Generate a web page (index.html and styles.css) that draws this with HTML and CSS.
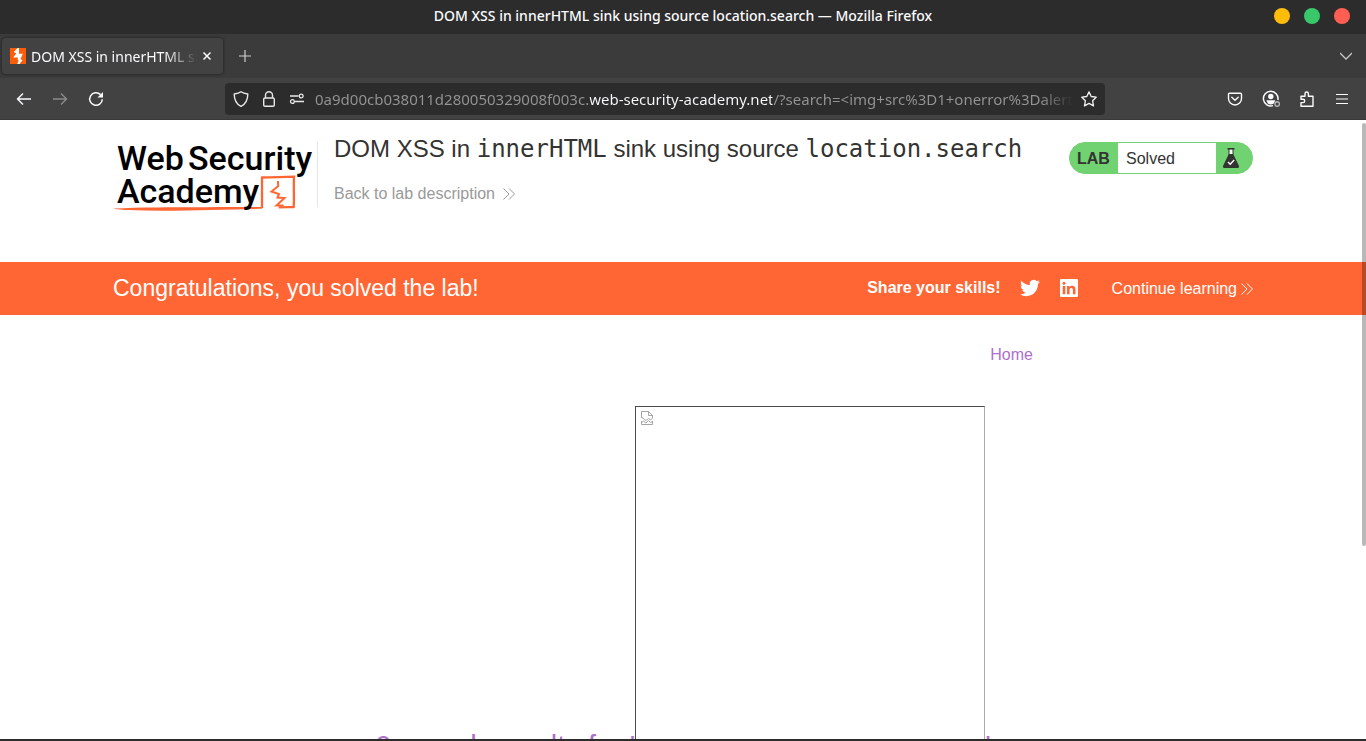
FILE: index.html
```html
<!DOCTYPE html>
<html lang="en">
<head>
<meta charset="utf-8">
<title>DOM XSS in innerHTML sink using source location.search</title>
<link rel="stylesheet" href="styles.css">
</head>
<body>
<div class="titlebar">
  <span class="window-title">DOM XSS in innerHTML sink using source location.search — Mozilla Firefox</span>
  <div class="window-buttons">
    <button class="dot dot-min" aria-label="Minimize"></button>
    <button class="dot dot-max" aria-label="Maximize"></button>
    <button class="dot dot-close" aria-label="Close"></button>
  </div>
</div>
<div class="tabbar">
  <div class="tab">
    <svg class="i16" viewBox="0 0 16 16"><path fill="#ff5c0a" d="M0 0h16v16H0z"/><path fill="#fff" d="M7.500 0H9v5.800h3.800L10.500 11l2 1.300L9.500 16H7.200l1.600-3.400-1-.6V9.500H3.200L6.300 5.200 3.800 4z"/></svg>
    <span class="tab-label">DOM XSS in innerHTML sink</span>
    <button class="icon-btn tab-close" aria-label="Close tab"><svg class="i10" viewBox="0 0 10 10" fill="none" stroke="#fbfbfe" stroke-width="1.500"><path d="M1.500 1.500l7 7M8.500 1.500l-7 7"/></svg></button>
  </div>
  <button class="icon-btn new-tab" aria-label="New tab"><svg class="i12" viewBox="0 0 12 12" fill="none" stroke="#d0d0d0" stroke-width="1.200"><path d="M6 0v12M0 6h12"/></svg></button>
  <button class="icon-btn tab-list" aria-label="List all tabs"><svg class="i12" viewBox="0 0 12 12" fill="none" stroke="#c4c4c4" stroke-width="1.300"><path d="M0 3l6 6 6-6"/></svg></button>
</div>
<div class="toolbar">
  <div class="nav">
    <button class="icon-btn" aria-label="Back"><svg class="i16" viewBox="0 0 16 16" fill="none" stroke="#fbfbfe" stroke-width="1.400"><path d="M15 8H1.500M7 2.500L1.500 8 7 13.500"/></svg></button>
    <button class="icon-btn" aria-label="Forward"><svg class="i16" viewBox="0 0 16 16" fill="none" stroke="#8b8b8b" stroke-width="1.400"><path d="M1 8h13.500M9 2.500L14.500 8 9 13.500"/></svg></button>
    <button class="icon-btn" aria-label="Reload"><svg class="i16" viewBox="0 0 16 16"><path fill="none" stroke="#fbfbfe" stroke-width="1.500" d="M14.300 8.200A6.300 6.300 0 1 1 12.500 3.600"/><path fill="#fbfbfe" d="M15 1v5.500H9.500z"/></svg></button>
  </div>
  <div class="urlbar">
    <svg class="i16" viewBox="0 0 16 16" fill="none" stroke="#e8e8e8" stroke-width="1.400" stroke-linejoin="round"><path d="M8 .8c1.600 1.200 4.200 1.900 6.800 2.200 0 6-2 10-6.800 12.400C3.200 13 1.200 9 1.200 3 3.800 2.700 6.400 2 8 .8z"/></svg>
    <svg class="i16" viewBox="0 0 16 16" fill="none" stroke="#e8e8e8" stroke-width="1.400"><rect x="2.700" y="7" width="10.600" height="8.200" rx="1.300"/><path d="M4.500 7V4.300a3.500 3.500 0 0 1 7 0V7"/></svg>
    <svg class="i16" viewBox="0 0 16 16" fill="none" stroke="#e8e8e8" stroke-width="1.300"><path d="M1 5h8.500M6 10.500h9"/><circle cx="12.200" cy="5" r="1.900"/><circle cx="3.400" cy="10.500" r="1.900"/></svg>
    <input class="url" type="text" aria-label="Address" value="0a9d00cb038011d280050329008f003c.web-security-academy.net/?search=&lt;img+src%3D1+onerror%3Dalert(1)&gt;">
    <button class="icon-btn" aria-label="Bookmark this page"><svg class="i16" viewBox="0 0 16 16" fill="none" stroke="#f0f0f0" stroke-width="1.300" stroke-linejoin="round"><path d="M8 .9l2.200 4.600 5 .7-3.600 3.500.9 5.200L8 12.400l-4.500 2.500.9-5.200L.8 6.200l5-.7z"/></svg></button>
  </div>
  <div class="tools">
    <button class="icon-btn" aria-label="Pocket"><svg class="i16" viewBox="0 0 16 16" fill="none" stroke="#fbfbfe" stroke-width="1.400" stroke-linecap="round" stroke-linejoin="round"><path d="M2.500 2.200h11a1 1 0 0 1 1 1v4.300a6.500 6.500 0 0 1-13 0V3.200a1 1 0 0 1 1-1zM4.800 6.300L8 9.200l3.200-2.900"/></svg></button>
    <button class="icon-btn" aria-label="Account"><svg class="i18" viewBox="0 0 18 18"><path fill="none" stroke="#fbfbfe" stroke-width="1.500" d="M15.900 10A7.300 7.300 0 1 0 11 15.600"/><circle cx="8.800" cy="6.500" r="2.700" fill="#fbfbfe"/><path fill="#fbfbfe" d="M4.300 10.300h9l-1.700 3.500a6 6 0 0 1-5.600 0z"/><circle cx="15.200" cy="14" r="2.200" fill="#424242" stroke="#b5b5b5" stroke-width="1.400"/></svg></button>
    <button class="icon-btn" aria-label="Extensions"><svg class="i16" viewBox="0 0 16 16" fill="none" stroke="#fbfbfe" stroke-width="1.400" stroke-linejoin="round"><path d="M2 5.200h4V2.700a1.700 1.700 0 0 1 3.400 0v2.500H14v10H2v-3.600h2a1.700 1.700 0 0 0 0-3.400H2z"/></svg></button>
    <button class="icon-btn" aria-label="Menu"><svg class="i16" viewBox="0 0 16 16" stroke="#fbfbfe" stroke-width="1.200"><path d="M2 3.500h12M2 8h12M2 12.500h12"/></svg></button>
  </div>
</div>
<div class="page">
  <header class="lab-header">
    <div class="container lab-head">
      <svg class="logo" viewBox="0 0 204 72" role="img" aria-label="Web Security Academy">
        <path d="M0 68.500c40-2 90-1 149-1.500v1.800c-40 .5-90 3-134 1.200C6 69.800 3 69.200 0 68.500z" fill="#ff6633"/>
        <path d="M149 68V37.500c10-.6 20-.3 32-.8-.5 10 .3 20-.3 30.300-5 .3-10 0-15 .4" fill="none" stroke="#ff6633" stroke-width="2.300"/>
        <path d="M165 41l.2 5-6.700 5.500 7.500 2.500-1.500 3.500 7 .5-8 7.500h7" fill="none" stroke="#ff6633" stroke-width="2"/>
        <text class="logo-text" x="4" y="30">Web</text>
        <text class="logo-text" x="75" y="30">Security</text>
        <text class="logo-text" x="4" y="63">Academy</text>
      </svg>
      <div class="lab-title">
        <h2>DOM XSS in <code>innerHTML</code> sink using source <code>location.search</code></h2>
        <a class="back" href="#">Back to lab description <svg class="chev" viewBox="0 0 12 12"><path d="M.5.500L6 6 .5 11.500M6 .5L11.500 6 6 11.500"/></svg></a>
      </div>
      <div class="lab-status">
        <span class="lab-tag">LAB</span>
        <span class="lab-state">Solved</span>
        <svg class="flask" viewBox="0 0 16 20"><path fill="#fff" d="M6 1.500h4v5H6z"/><path fill="#333332" d="M4.500 0h7v1.500h-1V6.500L16 18q.3 2-1.500 2h-13Q-.3 20 0 18L5.500 6.500v-5h-1zM6.500 1.500V6h3V1.500z"/><path d="M5 14l2.200 2.200 4-4.200" fill="none" stroke="#fff" stroke-width="1.400"/></svg>
      </div>
    </div>
  </header>
  <section class="banner">
    <div class="container banner-row">
      <h4>Congratulations, you solved the lab!</h4>
      <span class="share">Share your skills!</span>
      <a class="social" href="#" aria-label="Twitter"><svg class="i20" viewBox="0 0 24 24" fill="#fff"><path d="M23.950 4.570a10 10 0 0 1-2.820.77 4.960 4.960 0 0 0 2.160-2.720c-.95.550-2 .950-3.120 1.180a4.920 4.920 0 0 0-8.390 4.480C7.690 8.100 4.070 6.130 1.640 3.160a4.820 4.820 0 0 0-.66 2.480c0 1.710.87 3.210 2.180 4.100a4.900 4.900 0 0 1-2.220-.62v.06a4.920 4.920 0 0 0 3.950 4.830 5 5 0 0 1-2.210.08 4.940 4.940 0 0 0 4.600 3.420A9.870 9.870 0 0 1 0 19.540a14 14 0 0 0 7.550 2.210c9.050 0 14-7.500 14-13.980 0-.21 0-.42-.02-.63a9.940 9.940 0 0 0 2.420-2.570z"/></svg></a>
      <a class="social" href="#" aria-label="LinkedIn"><svg class="i20" viewBox="0 0 20 20"><rect x="1" y="1" width="18" height="18" rx="1" fill="#fff"/><path fill="#ff6633" d="M3.700 8h2.600v8.300H3.700zM8 8h2.500v1.200c1.500-2.200 6-1.900 6 2.100v5h-2.600v-4.500c0-2.400-3.300-2.200-3.300 0v4.500H8z"/><circle cx="5" cy="5.300" r="1.500" fill="#ff6633"/></svg></a>
      <a class="continue" href="#">Continue learning <svg class="chev" viewBox="0 0 12 12"><path d="M.5.500L6 6 .5 11.500M6 .5L11.500 6 6 11.500"/></svg></a>
    </div>
  </section>
  <main class="blog">
    <nav class="home"><a href="#">Home</a></nav>
    <h1>0 search results for '<span class="broken" role="img" aria-label="Missing image"><svg class="broken-icon" viewBox="0 0 14 14" fill="none" stroke="#a4a4a4" stroke-width="1"><path d="M1.500 7V.5h7l4 4V7M8.500.5v4h4M1.500 6l2.500 2 2 1.500 2.500-2 2 1.500 2-2M1.500 10v3.500h11V10M1.500 11.500l2-1.500 2.500 2 2.500-2.500 2 2 2-1"/></svg></span>'</h1>
  </main>
  <div class="scroll-thumb"></div>
</div>
</body>
</html>
```
FILE: styles.css
```css
* { box-sizing: border-box; }
body {
  margin: 0;
  height: 100vh;
  display: flex;
  flex-direction: column;
  overflow: hidden;
  background: #fff;
  color: #333332;
  font: 16px/24px "Liberation Sans", Arial, sans-serif;
  border-bottom: 2px solid #2c2c2c;
}
button { border: 0; padding: 0; background: none; }
svg { display: block; flex: none; }
a { text-decoration: none; }
.i10 { width: 10px; height: 10px; }
.i12 { width: 12px; height: 12px; }
.i16 { width: 16px; height: 16px; }
.i18 { width: 18px; height: 18px; }
.i20 { width: 20px; height: 20px; }
.icon-btn { display: flex; align-items: center; justify-content: center; }

.titlebar, .tabbar, .toolbar {
  display: flex;
  align-items: center;
  flex: none;
  color: #fbfbfe;
  font-family: "Noto Sans", sans-serif;
}
.titlebar {
  height: 34px;
  padding: 0 16px;
  background: #2c2c2c;
  display: grid;
  grid-template-columns: 1fr auto 1fr;
}
.window-title { grid-column: 2; font-size: 14px; font-weight: 500; line-height: 30px; padding-bottom: 2px; }
.window-buttons { display: flex; justify-content: flex-end; gap: 14px; padding-bottom: 2px; }
.dot { width: 16px; height: 16px; border-radius: 50%; }
.dot-min { background: #ffbd07; }
.dot-max { background: #38c86a; }
.dot-close { background: #ff5f52; }

.tabbar { height: 44px; background: #3b3b3b; padding: 0 14px 0 2px; }
.tab {
  display: flex;
  align-items: center;
  width: 221px;
  height: 36px;
  padding: 0 11px 0 8px;
  border-radius: 4px;
  background: #424242;
  box-shadow: 0 0 3px #1c1c1c;
}
.tab-label {
  flex: 1;
  margin: 0 5px;
  overflow: hidden;
  white-space: nowrap;
  font-size: 14px;
  line-height: 24px;
  padding-top: 1px;
  mask-image: linear-gradient(to left, transparent, #000 32px);
}
.new-tab { margin-left: 16px; }
.tab-list { margin-left: auto; }

.toolbar { height: 42px; padding: 0 16px; background: #424242; border-bottom: 1px solid #393939; }
.nav { display: flex; gap: 20px; flex: 209 1 0; }
.urlbar {
  flex: 0 1 880px;
  display: flex;
  align-items: center;
  gap: 12px;
  height: 32px;
  padding: 0 8px;
  border-radius: 4px;
  background: #2c2c2c;
}
.url {
  flex: 1;
  min-width: 0;
  height: 24px;
  margin: 0 -4px 0 -2px;
  padding: 0;
  border: 0;
  font: 15px/24px "Noto Sans", sans-serif;
  color: transparent;
  background: linear-gradient(to right, #949494 275px, #fbfbfe 275px 457px, #949494 457px calc(100% - 32px), transparent);
  background-clip: text;
}
.tools { display: flex; flex: 245 1 0; justify-content: flex-end; gap: 19px; }

.page { position: relative; flex: 1; min-height: 0; overflow: hidden; }
.container { max-width: 1140px; margin: 0 auto; display: flex; }
.lab-header { height: 142px; }
.lab-head { align-items: flex-start; }
.logo { width: 204px; height: 72px; margin-top: 20px; overflow: visible; }
.logo-text { font: 500 34px Roboto, sans-serif; fill: #000; }
.lab-title {
  flex: 1;
  margin: 22px 0 0;
  height: 65px;
  padding-left: 16px;
  border-left: 1px solid #e6e6e6;
}
h2 { margin: -7px 0 19px; font-size: 24px; line-height: 28px; font-weight: 400; }
code { font-family: "DejaVu Sans Mono", monospace; }
.back, .continue { display: flex; align-items: center; }
.back { gap: 8px; color: #999; }
.chev { width: 12px; height: 12px; fill: none; stroke: currentColor; stroke-width: 1; }
.lab-status {
  display: flex;
  align-items: center;
  width: 184px;
  height: 32px;
  margin-top: 22px;
  border: 1px solid #70d270;
  border-radius: 16px;
  overflow: hidden;
  background: #70d270;
}
.lab-tag { width: 48px; padding: 2px 0 0 7px; font-weight: 700; }
.lab-state { width: 98px; height: 30px; padding-left: 8px; line-height: 31px; background: #fff; }
.flask { width: 16px; height: 20px; margin-left: 7px; }

.banner { background: #ff6633; color: #fff; }
.banner-row { height: 53px; align-items: center; }
h4 { flex: 1; margin: 0; padding-bottom: 2px; font-size: 23px; line-height: 30px; font-weight: 400; }
.share { font-weight: 700; padding-bottom: 2px; }
.social { margin-left: 19px; padding-bottom: 1px; }
.continue { margin-left: 33px; gap: 4px; color: #fff; }

.blog { max-width: 700px; margin: 0 auto; text-align: center; }
.home { padding-top: 28px; text-align: right; }
.home a { color: #ad6fca; }
h1 { margin: 39px 0 0; font-size: 29px; font-weight: 400; line-height: 32px; color: #ad6fca; white-space: nowrap; }
.broken {
  display: inline-block;
  width: 350px;
  height: 350px;
  padding: 4px;
  border: 1px solid;
  border-color: #4a4a4a #ababab #ababab #4a4a4a;
}
.broken-icon { width: 14px; height: 14px; }
.scroll-thumb {
  position: absolute;
  top: 3px;
  right: 0;
  width: 4px;
  height: 423px;
  border-radius: 2px;
  background: rgba(0, 0, 0, 0.28);
}
```
